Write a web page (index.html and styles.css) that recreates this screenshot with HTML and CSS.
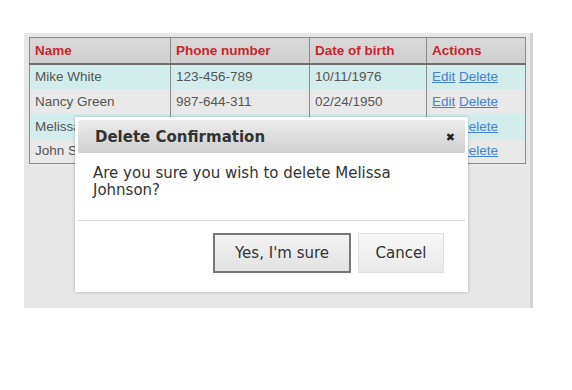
FILE: index.html
```html
<!DOCTYPE html>
<html lang="en">
<head>
  <meta charset="UTF-8" />
  <title>Contacts</title>
  <link rel="stylesheet" href="styles.css">
</head>
<body>

  <div class="panel">
    <table class="grid">
      <thead>
        <tr>
          <th class="c-name">Name</th>
          <th class="c-phone">Phone number</th>
          <th class="c-dob">Date of birth</th>
          <th class="c-act">Actions</th>
        </tr>
      </thead>
      <tbody>
        <tr class="alt">
          <td>Mike White</td><td>123-456-789</td><td>10/11/1976</td>
          <td><a href="#">Edit</a> <a href="#">Delete</a></td>
        </tr>
        <tr>
          <td>Nancy Green</td><td>987-644-311</td><td>02/24/1950</td>
          <td><a href="#">Edit</a> <a href="#">Delete</a></td>
        </tr>
        <tr class="alt">
          <td>Melissa Johnson</td><td>555-123-456</td><td>07/03/1982</td>
          <td><a href="#">Edit</a> <a href="#">Delete</a></td>
        </tr>
        <tr>
          <td>John Smith</td><td>321-654-987</td><td>12/05/1968</td>
          <td><a href="#">Edit</a> <a href="#">Delete</a></td>
        </tr>
      </tbody>
    </table>

    <div class="dialog">
      <div class="dialog-head">
        <span>Delete Confirmation</span>
        <span class="close">&#10006;</span>
      </div>
      <div class="dialog-body">Are you sure you wish to delete Melissa Johnson?</div>
      <div class="dialog-foot">
        <button class="btn btn-main">Yes, I'm sure</button>
        <button class="btn">Cancel</button>
      </div>
    </div>
  </div>

</body>
</html>
```

FILE: styles.css
```css
* {
  box-sizing: border-box;
}
body {
  margin: 0;
  background: #fff;
  font-family: 'Liberation Sans', Arial, sans-serif;
}
.panel {
  position: relative;
  width: 509px;
  height: 275px;
  margin: 33px 0 0 24px;
  padding: 4px 5px;
  background: #e7e7e7;
  border-right: 3px solid #d2d2d2;
}
.grid {
  width: 497px;
  border-collapse: collapse;
  border: 1px solid #8a8a8a;
  font-size: 13.5px;
  color: #555;
}
.grid th {
  text-align: left;
  height: 26px;
  padding: 0 5px;
  color: #c9252c;
  font-weight: bold;
  background: linear-gradient(#d9d9d9, #cfcfcf);
  border-left: 1px solid #8a8a8a;
  border-bottom: 2px solid #6f6f6f;
}
.grid td {
  height: 25px;
  padding: 0 5px;
  border-left: 1px solid #8a8a8a;
  background: #e9e9e9;
}
.grid tr.alt td {
  background: #d3eded;
}
.c-name { width: 141px; }
.c-phone { width: 139px; }
.c-dob { width: 117px; }
.grid a {
  color: #4483d4;
}
.dialog {
  position: absolute;
  left: 51px;
  top: 84px;
  width: 393px;
  height: 175px;
  padding: 3px;
  background: #fff;
  box-shadow: 0 0 3px rgba(0,0,0,0.25);
  font-family: 'DejaVu Sans', Verdana, sans-serif;
  color: #333;
}
.dialog-head {
  display: flex;
  justify-content: space-between;
  align-items: center;
  height: 33px;
  padding: 1px 10px 0 17px;
  border-radius: 2px;
  background: linear-gradient(#ececec, #cfcfcf);
  font-size: 15px;
  font-weight: bold;
  color: #333;
}
.close {
  font-size: 11px;
  color: #222;
}
.dialog-body {
  padding: 12px 30px 10px 15px;
  font-size: 15px;
  line-height: 17px;
  border-bottom: 1px solid #d4d4d4;
  height: 68px;
}
.dialog-foot {
  display: flex;
  justify-content: flex-end;
  gap: 7px;
  padding: 12px 21px 0 0;
}
.btn {
  height: 40px;
  font-family: 'DejaVu Sans', Verdana, sans-serif;
  font-size: 15px;
  color: #333;
  border: 1px solid #e0e0e0;
  background: linear-gradient(#f7f7f7, #e9e9e9);
  padding: 0;
  width: 86px;
}
.btn-main {
  width: 138px;
  border: 2px solid #777;
  background: linear-gradient(#f3f3f3, #e2e2e2);
}
```
